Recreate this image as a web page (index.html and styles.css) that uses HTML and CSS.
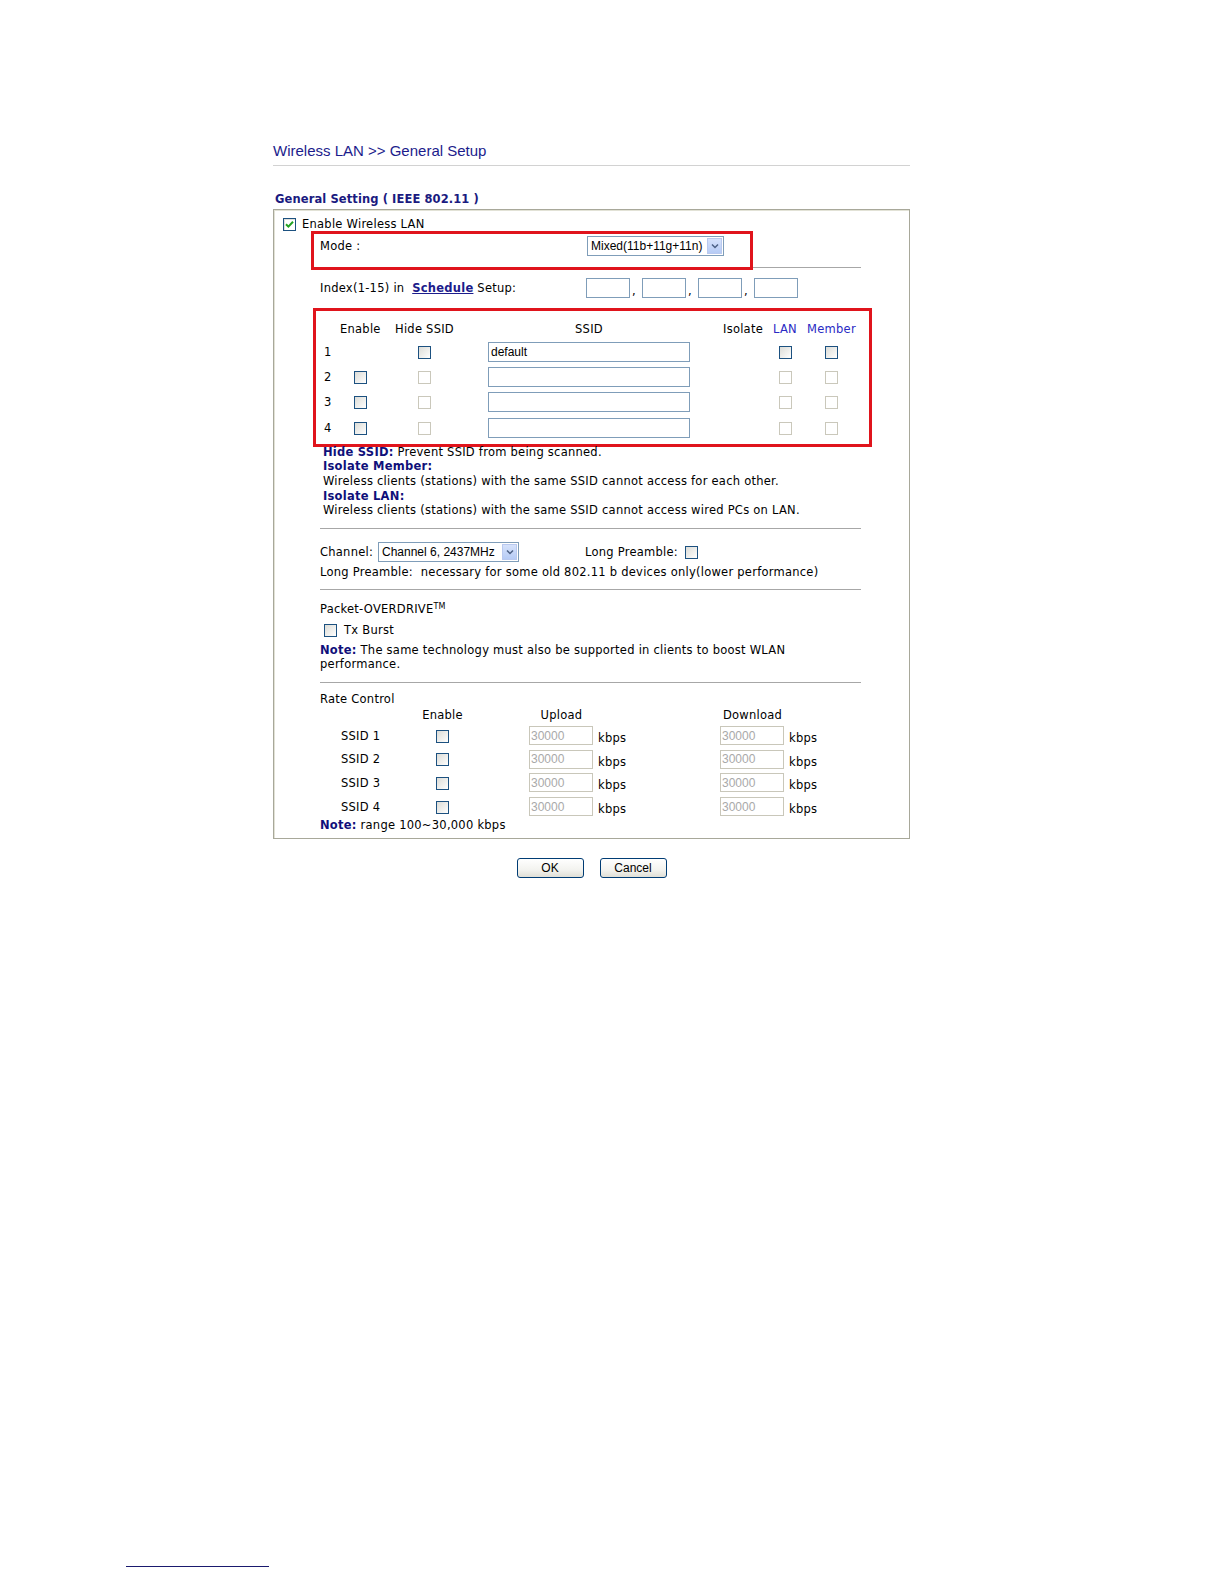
FILE: index.html
```html
<!DOCTYPE html>
<html lang="en">
  <head>
    <meta charset="UTF-8" />
    <title>Wireless LAN &gt;&gt; General Setup</title>
    <link rel="stylesheet" href="styles.css">
  </head>
  <body>
    <div class="page">
      <div class="title">Wireless LAN &gt;&gt; General Setup</div>
      <div class="section-title">General Setting ( IEEE 802.11 )</div>

      <div class="box">
        <div class="enable-row">
          <span class="cb checked">
            <svg viewBox="0 0 13 13" width="13" height="13"><path d="M3 6.2 L5.4 8.6 L10 3.8" fill="none" stroke="#21a121" stroke-width="2"/></svg>
          </span>
          <span>Enable Wireless LAN</span>
        </div>

        <div class="inner">
          <!-- Mode -->
          <div class="mode-row">
            <span>Mode :</span>
            <div class="select mode-select">
              <span class="select-text">Mixed(11b+11g+11n)</span>
              <span class="select-btn"><svg viewBox="0 0 8 6" width="8" height="6"><path d="M1 1.5 L4 4.5 L7 1.5" fill="none" stroke="#4d6185" stroke-width="1.5"/></svg></span>
            </div>
            <div class="mark mark-mode"></div>
          </div>

          <!-- Schedule -->
          <div class="index-row">
            <span class="index-label">Index(1-15) in&nbsp; <a href="#" class="link">Schedule</a> Setup:</span>
            <div class="index-fields">
              <input type="text" class="field small" /><span class="comma">,</span>
              <input type="text" class="field small" /><span class="comma">,</span>
              <input type="text" class="field small" /><span class="comma">,</span>
              <input type="text" class="field small" />
            </div>
          </div>

          <!-- SSID table -->
          <div class="ssid-box">
            <div class="ssid-grid">
              <div></div>
              <div class="c">Enable</div>
              <div class="c">Hide SSID</div>
              <div class="c">SSID</div>
              <div class="r">Isolate</div>
              <div class="c blue">LAN</div>
              <div class="c blue">Member</div>

              <div class="num">1</div>
              <div></div>
              <div class="c"><span class="cb"></span></div>
              <div class="c"><input type="text" class="field ssid" value="default" /></div>
              <div></div>
              <div class="c"><span class="cb"></span></div>
              <div class="c"><span class="cb"></span></div>

              <div class="num">2</div>
              <div class="c"><span class="cb"></span></div>
              <div class="c"><span class="cb off"></span></div>
              <div class="c"><input type="text" class="field ssid" /></div>
              <div></div>
              <div class="c"><span class="cb off"></span></div>
              <div class="c"><span class="cb off"></span></div>

              <div class="num">3</div>
              <div class="c"><span class="cb"></span></div>
              <div class="c"><span class="cb off"></span></div>
              <div class="c"><input type="text" class="field ssid" /></div>
              <div></div>
              <div class="c"><span class="cb off"></span></div>
              <div class="c"><span class="cb off"></span></div>

              <div class="num">4</div>
              <div class="c"><span class="cb"></span></div>
              <div class="c"><span class="cb off"></span></div>
              <div class="c"><input type="text" class="field ssid" /></div>
              <div></div>
              <div class="c"><span class="cb off"></span></div>
              <div class="c"><span class="cb off"></span></div>
            </div>
          </div>

          <div class="notes">
            <div><b class="navy">Hide SSID:</b> Prevent SSID from being scanned.</div>
            <div><b class="navy">Isolate Member:</b></div>
            <div>Wireless clients (stations) with the same SSID cannot access for each other.</div>
            <div><b class="navy">Isolate LAN:</b></div>
            <div>Wireless clients (stations) with the same SSID cannot access wired PCs on LAN.</div>
          </div>

          <hr class="rule" />

          <!-- Channel -->
          <div class="channel-row">
            <span class="channel-label">Channel:</span>
            <div class="select channel-select">
              <span class="select-text">Channel 6, 2437MHz</span>
              <span class="select-btn"><svg viewBox="0 0 8 6" width="8" height="6"><path d="M1 1.5 L4 4.5 L7 1.5" fill="none" stroke="#4d6185" stroke-width="1.5"/></svg></span>
            </div>
            <span class="preamble-label">Long Preamble:</span>
            <span class="cb"></span>
          </div>
          <div class="line lp-desc">Long Preamble: &nbsp;necessary for some old 802.11 b devices only(lower performance)</div>

          <hr class="rule rule-2" />

          <!-- Packet-OVERDRIVE -->
          <div class="line overdrive">Packet-OVERDRIVE<sup>TM</sup></div>
          <div class="tx-row">
            <span class="cb"></span>
            <span>Tx Burst</span>
          </div>
          <div class="note-text"><b class="navy">Note:</b> The same technology must also be supported in clients to boost WLAN<br />performance.</div>

          <hr class="rule rule-3" />

          <!-- Rate Control -->
          <div class="line rate-title">Rate Control</div>
          <div class="rate-grid">
            <div></div>
            <div class="c">Enable</div>
            <div class="up"><span class="hdr">Upload</span></div>
            <div><span class="hdr">Download</span></div>

            <div class="ssid-name">SSID 1</div>
            <div class="c"><span class="cb"></span></div>
            <div class="up"><input type="text" class="field rate" value="30000" disabled /><span class="kbps">kbps</span></div>
            <div><input type="text" class="field rate" value="30000" disabled /><span class="kbps">kbps</span></div>

            <div class="ssid-name">SSID 2</div>
            <div class="c"><span class="cb"></span></div>
            <div class="up"><input type="text" class="field rate" value="30000" disabled /><span class="kbps">kbps</span></div>
            <div><input type="text" class="field rate" value="30000" disabled /><span class="kbps">kbps</span></div>

            <div class="ssid-name">SSID 3</div>
            <div class="c"><span class="cb"></span></div>
            <div class="up"><input type="text" class="field rate" value="30000" disabled /><span class="kbps">kbps</span></div>
            <div><input type="text" class="field rate" value="30000" disabled /><span class="kbps">kbps</span></div>

            <div class="ssid-name">SSID 4</div>
            <div class="c"><span class="cb"></span></div>
            <div class="up"><input type="text" class="field rate" value="30000" disabled /><span class="kbps">kbps</span></div>
            <div><input type="text" class="field rate" value="30000" disabled /><span class="kbps">kbps</span></div>
          </div>
          <div class="line range-note"><b class="navy">Note:</b> range 100~30,000 kbps</div>
        </div>
      </div>

      <div class="buttons">
        <button class="btn">OK</button>
        <button class="btn">Cancel</button>
      </div>
    </div>

    <div class="foot-rule"></div>
  </body>
</html>
```

FILE: styles.css
```css
body {
  margin: 0;
  font-family: "DejaVu Sans", Verdana, sans-serif;
  font-size: 11.5px;
  letter-spacing: 0.25px;
  color: #000;
  background: #fff;
}
.page {
  width: 637px;
  margin-left: 273px;
  padding-top: 141px;
}
.title {
  font-family: "Liberation Sans", Arial, sans-serif;
  font-size: 15px;
  letter-spacing: 0;
  line-height: 20px;
  color: #1c1c8c;
  padding-bottom: 4px;
  border-bottom: 1px solid #d2d2d2;
}
.section-title {
  margin-top: 24px;
  margin-left: 2px;
  line-height: 18px;
  font-weight: bold;
  font-size: 11.5px;
  color: #1a1a80;
  letter-spacing: 0.1px;
}
.box {
  margin-top: 1px;
  border: 1px solid #a8a89a;
  box-shadow: inset 1px 1px 0 #e2e2d6;
  padding: 6px 0 6px 0;
}
.enable-row {
  display: flex;
  align-items: center;
  gap: 6px;
  padding-left: 9px;
  line-height: 16px;
}
.inner {
  margin: 0 46px 0 46px;
}

/* checkboxes */
.cb {
  display: inline-block;
  width: 11px;
  height: 11px;
  border: 1px solid #1c5180;
  background: linear-gradient(135deg, #dcdcd7 0%, #f4f4f2 70%, #fff 100%);
  vertical-align: middle;
  position: relative;
}
.cb.checked {
  background: #fff;
  box-shadow: inset 1px 1px 0 #e0e0dc;
}
.cb.checked svg {
  position: absolute;
  left: -1px;
  top: -1px;
}
.cb.off {
  border-color: #cac8bb;
  background: #fff;
}

/* fake selects */
.select {
  display: flex;
  align-items: center;
  height: 18px;
  border: 1px solid #7f9db9;
  background: #fff;
  font-family: "Liberation Sans", Arial, sans-serif;
  font-size: 12px;
  letter-spacing: 0;
}
.select-text {
  flex: 1;
  padding-left: 3px;
  white-space: nowrap;
}
.select-btn {
  width: 15px;
  height: 16px;
  margin-right: 1px;
  background: linear-gradient(#d6e2fb, #b6cbf5);
  border: 1px solid #b9c9ef;
  box-sizing: border-box;
  display: flex;
  align-items: center;
  justify-content: center;
}

/* text fields */
.field {
  box-sizing: border-box;
  height: 20px;
  border: 1px solid #7f9db9;
  padding: 0 2px;
  font-family: "Liberation Sans", Arial, sans-serif;
  font-size: 12px;
  background: #fff;
  margin: 0;
}

/* annotation frames */
.mark {
  position: absolute;
  border: 3px solid #e0141c;
  box-sizing: border-box;
}

.mode-row {
  position: relative;
  display: grid;
  grid-template-columns: 267px 137px;
  align-items: center;
  margin: 4px 2px 0 -6px;
  padding: 0 0 11px 6px;
  border-bottom: 1px solid #a7a7a7;
  height: 20px;
}
.mode-select {
  width: 135px;
}
.mark-mode {
  left: -3px;
  top: -5px;
  width: 442px;
  height: 39px;
}

.index-row {
  display: grid;
  grid-template-columns: 266px auto;
  align-items: center;
  margin-top: 10px;
  height: 20px;
}
.link {
  color: #1c1c8c;
  font-weight: bold;
}
.index-fields {
  display: flex;
  align-items: flex-end;
}
.field.small {
  width: 44px;
}
.comma {
  width: 12px;
  padding-left: 2px;
  box-sizing: border-box;
  line-height: 14px;
}

.ssid-box {
  margin: 10px -9px 0 -7px;
  border: 3px solid #e0141c;
  padding: 8px 0 3.5px 0;
}
.ssid-grid {
  display: grid;
  grid-template-columns: 24px 40px 89px 240px 57px 38px 55px;
  grid-template-rows: 20px repeat(4, 25.3px);
  align-items: center;
}
.ssid-grid .num {
  padding-left: 8px;
}
.c {
  text-align: center;
}
.r {
  text-align: right;
  padding-right: 3px;
}
.blue {
  color: #2a2ac4;
}
.field.ssid {
  width: 202px;
}

.navy {
  color: #10107a;
}
.notes {
  margin-top: -2px;
  padding-left: 3px;
  line-height: 14.67px;
}
.rule {
  border: none;
  border-top: 1px solid #a7a7a7;
  margin: 10px 2px 0 0;
}
.channel-row {
  display: flex;
  align-items: center;
  margin-top: 13px;
  height: 20px;
}
.channel-label {
  width: 58px;
}
.channel-select {
  width: 139px;
}
.preamble-label {
  margin-left: 66px;
  margin-right: 7px;
}
.line {
  line-height: 14px;
}
.lp-desc {
  margin-top: 3px;
}
.rule-2 {
  margin-top: 10px;
}
.overdrive {
  margin-top: 12px;
}
.overdrive sup {
  font-size: 8px;
  vertical-align: 4px;
  line-height: 0;
}
.tx-row {
  display: flex;
  align-items: center;
  gap: 7px;
  margin-top: 7px;
  padding-left: 4px;
  line-height: 14px;
}
.note-text {
  margin-top: 6px;
  line-height: 14.2px;
}
.rule-3 {
  margin-top: 11px;
}
.rate-title {
  margin-top: 9px;
}
.rate-grid {
  display: grid;
  grid-template-columns: 95px 55px 250px auto;
  grid-template-rows: 16.5px repeat(4, 23.6px);
  align-items: center;
  margin-top: 1px;
}
.rate-grid > div:nth-child(-n+4) {
  align-self: start;
  line-height: 16px;
}
.ssid-name {
  padding-left: 21px;
}
.rate-grid .up {
  padding-left: 59px;
}
.hdr {
  display: inline-block;
  width: 65px;
  text-align: center;
}
.field.rate {
  width: 64px;
  height: 19px;
  color: #a9a9a9;
  border-color: #c9c7ba;
  padding: 0 1px;
  vertical-align: middle;
}
.kbps {
  margin-left: 5px;
  vertical-align: -3px;
}
.range-note {
  margin-top: 0;
}

.buttons {
  display: flex;
  justify-content: center;
  gap: 16px;
  margin-top: 19px;
}
.btn {
  width: 67px;
  height: 20px;
  border: 1px solid #003c74;
  border-radius: 3px;
  background: linear-gradient(#fff 0%, #f3f3ef 60%, #e0dfd6 100%);
  font-family: "Liberation Sans", Arial, sans-serif;
  font-size: 12px;
  padding: 0;
  color: #000;
}
.foot-rule {
  margin: 688px 0 0 126px;
  width: 143px;
  border-top: 1px solid #1a1a6e;
}
```
